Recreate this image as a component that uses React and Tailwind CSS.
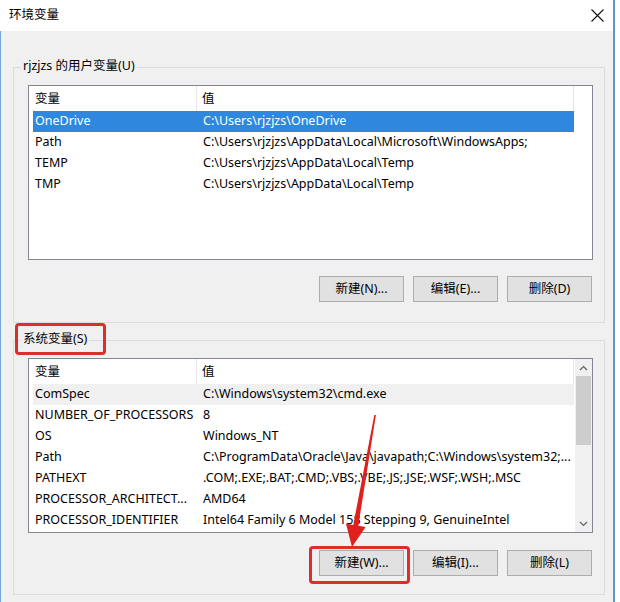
import React from 'react';

const font = { fontFamily: '"Noto Sans", "Noto Sans CJK SC", sans-serif' };

const userVars = [
  ['OneDrive', 'C:\\Users\\rjzjzs\\OneDrive'],
  ['Path', 'C:\\Users\\rjzjzs\\AppData\\Local\\Microsoft\\WindowsApps;'],
  ['TEMP', 'C:\\Users\\rjzjzs\\AppData\\Local\\Temp'],
  ['TMP', 'C:\\Users\\rjzjzs\\AppData\\Local\\Temp'],
];

const sysVars = [
  ['ComSpec', 'C:\\Windows\\system32\\cmd.exe'],
  ['NUMBER_OF_PROCESSORS', '8'],
  ['OS', 'Windows_NT'],
  ['Path', 'C:\\ProgramData\\Oracle\\Java\\javapath;C:\\Windows\\system32;...'],
  ['PATHEXT', '.COM;.EXE;.BAT;.CMD;.VBS;.VBE;.JS;.JSE;.WSF;.WSH;.MSC'],
  ['PROCESSOR_ARCHITECT...', 'AMD64'],
  ['PROCESSOR_IDENTIFIER', 'Intel64 Family 6 Model 158 Stepping 9, GenuineIntel'],
];

const Header = () => (
  <div className="flex h-[25px] items-center text-[12.5px] text-black">
    <div className="w-[168px] h-full flex items-center pl-[6px] pt-[1px] border-r border-[#e5e5e5]">变量</div>
    <div className="w-[377px] h-full flex items-center pl-[5px] pt-[1px] border-r border-[#e5e5e5]">值</div>
  </div>
);

const Row = ({ name, value, state }) => {
  const cls =
    state === 'active'
      ? 'bg-[#3088de] text-white'
      : state === 'inactive'
      ? 'bg-[#f0f0f0] text-black'
      : 'text-black';
  return (
    <div className={`ml-[4px] w-[541px] h-[21px] flex items-center text-[12.5px] whitespace-nowrap ${cls}`}>
      <div className="w-[170px] pl-[2px] overflow-hidden">{name}</div>
      <div className="flex-1 overflow-hidden">{value}</div>
    </div>
  );
};

const Button = ({ children }) => (
  <button className="w-[85px] h-[26px] bg-[#e1e1e1] border border-[#adadad] text-[12.5px] text-black flex items-center justify-center">
    {children}
  </button>
);

const Chevron = ({ down }) => (
  <svg width="9" height="6" viewBox="0 0 9 6">
    <path d={down ? 'M1 1 L4.5 4.5 L8 1' : 'M1 5 L4.5 1.5 L8 5'} fill="none" stroke="#606060" strokeWidth="1.2" />
  </svg>
);

const GroupBox = ({ label, children, height }) => (
  <div className={`relative border border-[#dcdcdc] ${height}`}>
    <span className="absolute -top-[11px] left-[7px] px-[2px] bg-[#f0f0f0] text-[12.5px] text-black leading-[18px]">
      {label}
    </span>
    {children}
  </div>
);

export default function App() {
  return (
    <div className="w-[620px] h-[602px] bg-white relative overflow-hidden" style={font}>
      <div className="w-[615px] h-full border-r-2 border-[#5d95d6] flex flex-col">
        {/* Title bar */}
        <div className="h-[31px] bg-white flex items-center justify-between pl-[9px] pr-[9px]">
          <span className="text-[12.5px] text-black">环境变量</span>
          <svg width="13" height="13" viewBox="0 0 13 13">
            <path d="M0.5 0.5 L12.5 12.5 M12.5 0.5 L0.5 12.5" stroke="#111" strokeWidth="1.1" />
          </svg>
        </div>

        {/* Body */}
        <div className="flex-1 bg-[#f0f0f0] border-l border-[#7aa6dc] pl-[12px] pr-[8px]">
          <div className="mt-[36px]">
            <GroupBox label="rjzjzs 的用户变量(U)" height="h-[256px]">
              <div className="ml-[14px] mt-[17px] w-[565px] h-[175px] border border-[#828790] bg-white">
                <Header />
                {userVars.map(([n, v], i) => (
                  <Row key={n} name={n} value={v} state={i === 0 ? 'active' : ''} />
                ))}
              </div>
              <div className="mt-[16px] flex justify-end gap-[9px] pr-[12px]">
                <Button>新建(N)...</Button>
                <Button>编辑(E)...</Button>
                <Button>删除(D)</Button>
              </div>
            </GroupBox>
          </div>

          <div className="mt-[17px]">
            <GroupBox label="系统变量(S)" height="h-[255px]">
              <div className="ml-[14px] mt-[17px] w-[565px] h-[175px] border border-[#828790] bg-white flex">
                <div className="flex-1">
                  <Header />
                  {sysVars.map(([n, v], i) => (
                    <Row key={n + i} name={n} value={v} state={i === 0 ? 'inactive' : ''} />
                  ))}
                </div>
                <div className="w-[17px] bg-[#f0f0f0] flex flex-col items-center">
                  <div className="h-[17px] w-full flex items-center justify-center">
                    <Chevron />
                  </div>
                  <div className="w-[15px] h-[69px] bg-[#cdcdcd]" />
                  <div className="flex-1" />
                  <div className="h-[17px] w-full flex items-center justify-center">
                    <Chevron down />
                  </div>
                </div>
              </div>
              <div className="mt-[17px] flex justify-end gap-[9px] pr-[12px]">
                <Button>新建(W)...</Button>
                <Button>编辑(I)...</Button>
                <Button>删除(L)</Button>
              </div>
            </GroupBox>
          </div>
        </div>
      </div>

      {/* Annotations */}
      <div className="absolute left-[15px] top-[323px] w-[91px] h-[32px] border-[3px] border-[#d9302a] rounded-[4px] pointer-events-none" />
      <div className="absolute left-[309px] top-[546px] w-[101px] h-[38px] border-[3px] border-[#d9302a] rounded-[4px] pointer-events-none" />
      <svg className="absolute inset-0 pointer-events-none" width="620" height="602">
        <polygon
          points="374.3,414.9 375.9,415.1 358.3,525.7 365.6,527 352,547 345.9,523.6 353.3,524.9"
          fill="#e0201c"
        />
      </svg>
    </div>
  );
}
